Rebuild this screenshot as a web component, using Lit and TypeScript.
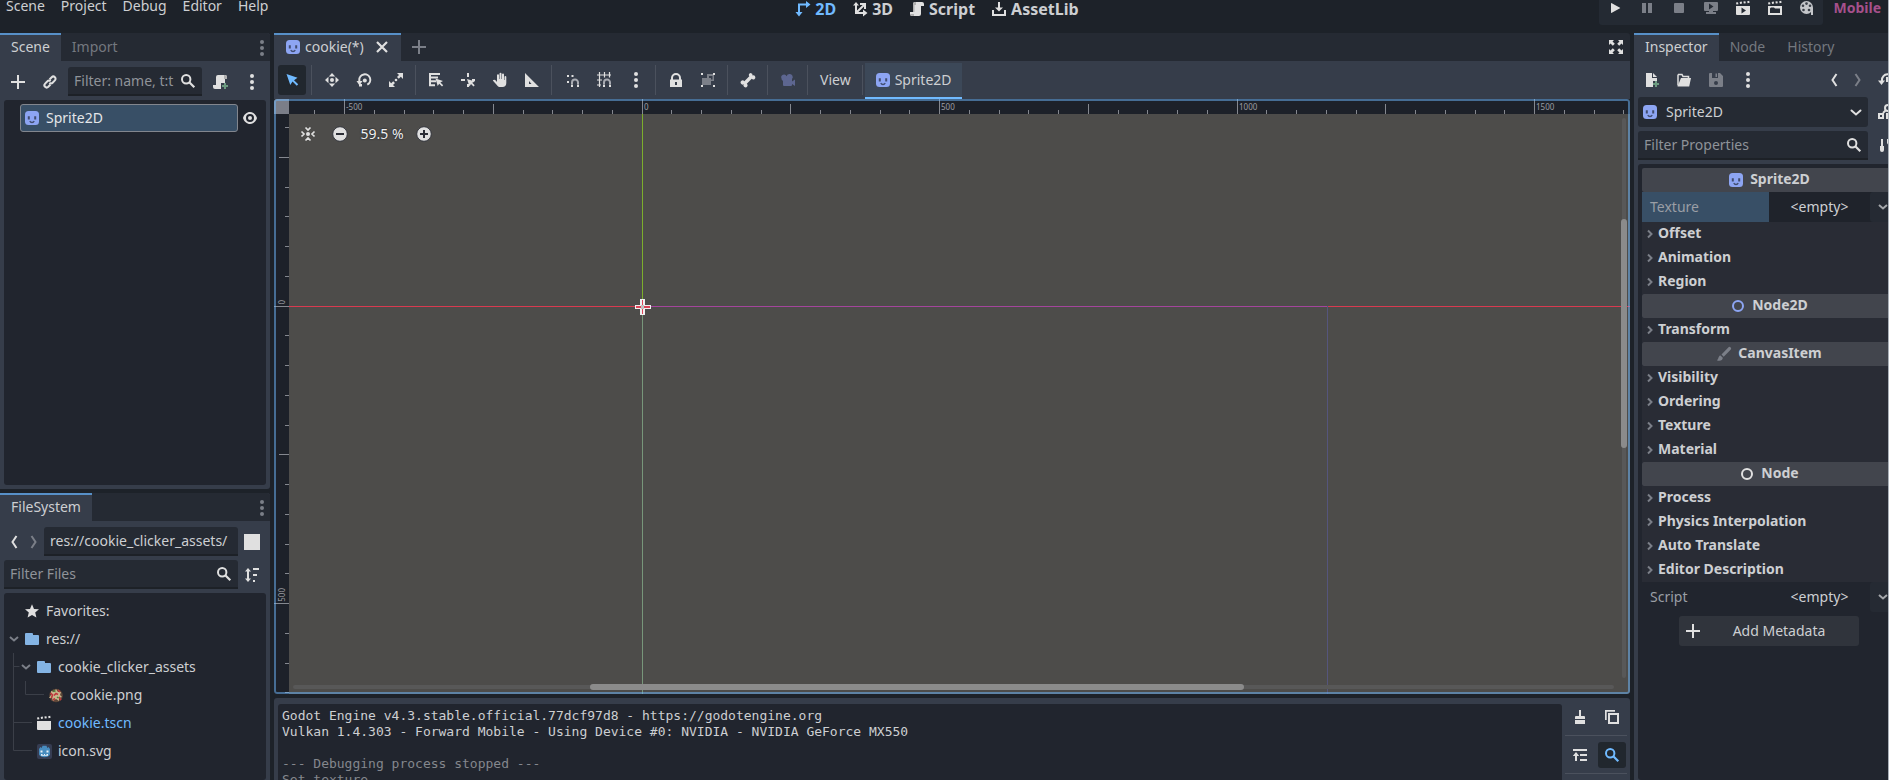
import { LitElement, html, svg, css, nothing } from "lit";
import { customElement, property } from "lit/decorators.js";
import { classMap } from "lit/directives/class-map.js";

const ICONS: Record<string, unknown> = {
  sprite: svg`<rect x="1" y="1" width="14" height="14" rx="3.5" fill="#8da5f3"/><path d="M3.8 6.2h2v3.4h-2zM10.2 6.2h2v3.4h-2z" fill="#414d70"/><path d="M5.8 11q.6 1.500 2.200 1.500T10.200 11" fill="none" stroke="#414d70" stroke-width="1.300"/>`,
  add: svg`<path d="M7 1v6H1v2h6v6h2V9h6V7H9V1z"/>`,
  link: svg`<g fill="none" stroke="currentColor" stroke-width="2"><path d="M7.500 5.500l2.200-2.300a2.200 2.200 0 0 1 3.200 3.200L10.600 8.700a2.200 2.200 0 0 1-3.200 0"/><path d="M8.500 10.500l-2.200 2.300a2.200 2.200 0 0 1-3.200-3.200l2.300-2.300a2.200 2.200 0 0 1 3.200 0"/></g>`,
  search: svg`<g fill="none" stroke="currentColor" stroke-width="2"><circle cx="6.200" cy="6.200" r="4.200"/><path d="M9.300 9.300l5 5" stroke-width="2.200"/></g>`,
  scriptAdd: svg`<path d="M6 1a2 2 0 0 0-2 2v8H1v2a2 2 0 0 0 2 2h6V9h4V5h2V3a2 2 0 0 0-2-2z"/><path d="M12 1h1a2 2 0 0 1 2 2v2h-3z" fill="#b0b0b0"/><path d="M12 9v2h-2v2h2v2h2v-2h2v-2h-2V9z" fill="#6c9a80"/>`,
  script: svg`<path d="M6 1a2 2 0 0 0-2 2v8H1v2a2 2 0 0 0 2 2h7a2 2 0 0 0 2-2V5h3V3a2 2 0 0 0-2-2z"/><path d="M6 1a2 2 0 0 0-2 2v8h1.500V4H7V1zM1 13h4v2H3a2 2 0 0 1-2-2z" fill="#b0b0b0"/>`,
  dots: svg`<circle cx="8" cy="2" r="2"/><circle cx="8" cy="8" r="2"/><circle cx="8" cy="14" r="2"/>`,
  eye: svg`<path d="M8 2C4.800 2 2 4.400 1 8c1 3.600 3.900 6 7 6s6-2.400 7-6c-1-3.600-3.800-6-7-6zm0 2a4 4 0 1 1 0 8 4 4 0 0 1 0-8zm0 2a2 2 0 1 0 0 4 2 2 0 0 0 0-4z"/>`,
  prev: svg`<path d="M10.500 2 6.500 8l4 6" fill="none" stroke="currentColor" stroke-width="2"/>`,
  next: svg`<path d="M5.500 2l4 6-4 6" fill="none" stroke="currentColor" stroke-width="2"/>`,
  square: svg`<path d="M0 0h16v16H0z"/>`,
  sort: svg`<path d="M4 1 1 4.500h2v7H1L4 15l3-3.500H5v-7h2zM9 1h6v2H9zM9 7h4v2H9zM9 13h2v2H9z"/>`,
  star: svg`<path d="M8 1.200l2 4.700 5 .4-3.800 3.300 1.200 5L8 12l-4.400 2.600 1.200-5L1 6.300l5-.4z"/>`,
  down: svg`<path d="M4 6l4 3.500L12 6" fill="none" stroke="currentColor" stroke-width="2"/>`,
  right: svg`<path d="M6 4.500 9.500 8 6 11.500" fill="none" stroke="currentColor" stroke-width="2"/>`,
  choose: svg`<path d="M3.500 6.500 8 10.500l4.500-4" fill="none" stroke="currentColor" stroke-width="2" stroke-linecap="round"/>`,
  folder: svg`<path d="M2 2a1 1 0 0 0-1 1v10a1 1 0 0 0 1 1h12a1 1 0 0 0 1-1V5a1 1 0 0 0-1-1H9V3a1 1 0 0 0-1-1z"/>`,
  clap: svg`<path d="M1 6h14v8a1 1 0 0 1-1 1H2a1 1 0 0 1-1-1zM1 2.600l2-.4.4 2-2 .4zM4.700 2l2-.4.4 2-2 .4zM8.400 1.600l2-.4.4 2-2 .4zM12.200 1.200l2-.4.4 2-2 .4z"/>`,
  cookie: svg`<circle cx="8" cy="8.500" r="6.800" fill="#5c4638"/><path d="M3 4l3 1 2-3 2 3 3 0-1 3 2 2-3 1 0 3-3-2-3 2-1-3-3 0 2-3z" fill="#c9b68c"/><path d="M2.500 6l2 2-1 3M6 8.500l2-2 2 1M10 3l2 2M5 13l2-1.500M11 10l2 3" stroke="#c0363c" stroke-width="1.600" fill="none"/><path d="M5.500 3.500l2 1M9 10l1.500 1" stroke="#4e8a3d" stroke-width="1.500"/>`,
  godot: svg`<rect x="1" y="1" width="15" height="15" rx="2" fill="#363d52"/><path d="M3 6l1.500-2 1.200 1 .8-2.200h4L11.300 5l1.200-1L14 6v5.500q-1.500 2.700-5.500 2.700T3 11.500z" fill="#478cbf"/><path d="M4.500 7.500h2v2h-2zM10.500 7.500h2v2h-2zM5 11h1.500v1H8v-1h1v1h1.500v-1H12v1.800H5z" fill="#e8f0f8"/>`,
  close: svg`<path d="M3 3l10 10M13 3 3 13" fill="none" stroke="currentColor" stroke-width="2.200"/>`,
  expand: svg`<path d="M1 1h5L4.500 2.500l2.300 2.300-2 2L2.500 4.500 1 6zM15 1v5l-1.500-1.500-2.300 2.300-2-2 2.300-2.300L10 1zM1 15v-5l1.500 1.500 2.300-2.300 2 2-2.300 2.300L6 15zM15 15h-5l1.500-1.500-2.300-2.300 2-2 2.300 2.300L15 10z"/>`,
  cursor: svg`<path d="M2.500 2l3.800 11 2.200-3.600 4.300 4.300 1.400-1.400L10 8.200l3.500-2.400z"/>`,
  move: svg`<path d="M8 1 4.800 4.500h6.400zM1 8l3.500-3.200v6.400zM15 8l-3.500-3.200v6.400zM8 15l-3.200-3.500h6.400z"/><circle cx="8" cy="8" r="2"/>`,
  rotate: svg`<path d="M3.300 9V8a5.500 5.500 0 1 1 8 4.700" fill="none" stroke="currentColor" stroke-width="2"/><path d="M.5 9h6l-3 4.500z"/><path d="M3 12h3v2.500H3z"/><circle cx="8.800" cy="8.500" r="2"/>`,
  scale: svg`<path d="M9 1h6v6l-2.200-2.200-2 2L9 5l2-2zM7 15H1V9l2.200 2.200 2-2L7 11l-2 2z"/><circle cx="8" cy="8" r="1.300"/>`,
  list: svg`<path d="M1 1h11v2H3v1.500h7v2H3v1.800h5v2H3v2h4v2H1z"/><path d="M7.500 6.500l2.200 7.500 1.500-2.300 2.800 2.800 1.200-1.200-2.800-2.800L15 9z"/>`,
  pivot: svg`<path d="M7 1h2v4H7zM1 7h4v2H1zM7 12h2v3H7zM12 7h3v2h-3z"/><path d="M7 7l2.500 7.500 1.500-2.500 2.500 2.500 1.200-1.200-2.500-2.500L15 9.500z"/>`,
  hand: svg`<path d="M5 3.200a1 1 0 0 1 2 0V7h.5V1.800a1 1 0 0 1 2 0V7h.5V2.500a1 1 0 0 1 2 0V8h.5V5a.9.9 0 0 1 1.800 0v6c0 2.500-1.500 4-3.800 4H8c-1.500 0-2.200-.6-3-1.800L.8 8.500c.8-1 2.200-.8 3 .1L5 10z"/>`,
  ruler: svg`<path d="M1 1v14h14zm4 8 2.500 3H5z" fill-rule="evenodd"/>`,
  snap: svg`<path d="M3 3h2v2H3zM7.500 3h2v2h-2zM3 9h2v2H3z"/><path d="M8 12v-1.500a3 3 0 0 1 6 0V12" fill="none" stroke="#a8abb2" stroke-width="2"/><path d="M7 12.500h2V15H7zM13 12.500h2V15h-2z"/>`,
  grid: svg`<path d="M3.500 0v15M8.500 0v5.500M13.500 0v5.500M1 3h14M1 8h5M1 13h4" fill="none" stroke="currentColor" stroke-width="1.200"/><path d="M8 12v-1.500a3 3 0 0 1 6 0V12" fill="none" stroke="#a8abb2" stroke-width="2"/><path d="M7 12.500h2V15H7zM13 12.500h2V15h-2z"/>`,
  lock: svg`<path d="M8 1a5 5 0 0 0-5 5v1.500H2V15h12V7.500h-1V6a5 5 0 0 0-5-5zm0 2a3 3 0 0 1 3 3v1.500H5V6a3 3 0 0 1 3-3zM7 10h2v3H7z" fill-rule="evenodd"/>`,
  group: svg`<path d="M7 2h7v7h-3v4H2V6h5zm2 2v2h2v1.500h1.500V4z" fill="#7c8089" fill-rule="evenodd"/><path d="M1 1h2v2H1zM13 1h2v2h-2zM1 13h2v2H1zM13 13h2v2h-2z"/>`,
  bone: svg`<path d="M10.500 1a2 2 0 0 0-1.200 3.300L4.300 9.200A2.100 2.100 0 1 0 3.700 12.300 2.100 2.100 0 1 0 6.800 11.700l4.900-4.900A2.100 2.100 0 1 0 12.600 3.400 2.200 2.200 0 0 0 10.500 1z"/>`,
  camera: svg`<path d="M9.500 2a3 3 0 0 0-2.900 2.200A2.700 2.700 0 0 0 1.500 6.500c0 1.200.6 1.800 1.500 2.300V13a1 1 0 0 0 1 1h7a1 1 0 0 0 1-1v-1l3 2V7.500l-3 2V7a3 3 0 0 0-2.500-5z"/>`,
  w2d: svg`<path d="M11 0v2.500H3V11H.5L4 15.500 7.500 11H5V4.500h6V7l4.500-3.500z"/>`,
  w3d: svg`<path d="M4 1 1 4.500h2V13h8v2.500L15.500 12 11 8.500V11H6.400L12 5.400V8h2V2H8v2h2.600L5 9.600V4.500h2z"/>`,
  asset: svg`<path d="M7 1h2v5.500h3L8 10.500l-4-4h3zM1 9h2v4h10V9h2v6H1z"/>`,
  play: svg`<path d="M4 12.500a.5.500 0 0 0 .8.300L13 8.300a.4.400 0 0 0 0-.6L4.800 3.200a.5.500 0 0 0-.8.300z"/>`,
  pause: svg`<path d="M3 3h4v10H3zM9 3h4v10H9z"/>`,
  stop: svg`<rect x="3" y="3" width="10" height="10" rx="1"/>`,
  remote: svg`<path d="M2 2h12a1 1 0 0 1 1 1v7a1 1 0 0 1-1 1h-4v1h3v2H3v-2h3v-1H2a1 1 0 0 1-1-1V3a1 1 0 0 1 1-1zm4 1.500v6l4.500-3z" fill-rule="evenodd"/>`,
  playScene: svg`<path d="M1 6h14v8a1 1 0 0 1-1 1H2a1 1 0 0 1-1-1zm5.500 1.500v6l4.500-3z" fill-rule="evenodd"/><path d="M1 2.600l2-.4.4 2-2 .4zM4.700 2l2-.4.4 2-2 .4zM8.400 1.600l2-.4.4 2-2 .4zM12.200 1.200l2-.4.4 2-2 .4z"/>`,
  playCustom: svg`<path d="M1 6h14v9H1zm2 2.500V13h10V8.500H8L7 7.500H4z" fill-rule="evenodd"/><path d="M1 2.600l2-.4.4 2-2 .4zM4.700 2l2-.4.4 2-2 .4zM8.400 1.600l2-.4.4 2-2 .4zM12.200 1.200l2-.4.4 2-2 .4z"/>`,
  reel: svg`<g fill="#c4c6ca"><circle cx="7.500" cy="7.500" r="6.500"/><path d="M12 8h2v7h-2z"/></g><g fill="#3a3f48"><circle cx="7.500" cy="3.600" r="1.300"/><circle cx="11" cy="5.800" r="1.300"/><circle cx="4" cy="5.800" r="1.300"/><circle cx="4.500" cy="10" r="1.300"/><circle cx="10" cy="10" r="1.300"/></g>`,
  fileNew: svg`<path d="M2 1v14h7V9h4V6H8V1zM9 1v4h4z"/><path d="M11 9v2H9v2h2v2h2v-2h2v-2h-2V9z" fill="#6c9a80"/>`,
  load: svg`<path d="M2 2.500h4l1 2h5.500v2.500M2 2.500v11" fill="none" stroke="currentColor" stroke-width="1.500"/><path d="M5 6h10l-1.800 8.500H1.500z"/>`,
  save: svg`<path d="M1 2v12a1 1 0 0 0 1 1h12a1 1 0 0 0 1-1V4l-3-3H2a1 1 0 0 0-1 1zm3-1h6v5H4zm4 8a2 2 0 1 1 0 4 2 2 0 0 1 0-4z" fill-rule="evenodd"/><path d="M7.500 1.500h1.500v3.500H7.500z"/>`,
  history: svg`<path d="M4 9V8a5.500 5.500 0 1 1 6 5.300" fill="none" stroke="currentColor" stroke-width="2"/><path d="M0 8.500h7L3.500 13z"/><path d="M8 5h2v5H8z"/>`,
  manage: svg`<circle cx="10" cy="4" r="3" fill="none" stroke="currentColor" stroke-width="2"/><path d="M8 6l-3 3" stroke="currentColor" stroke-width="2"/><path d="M0 9h6v6H0zM8 9h6v6H8zm-6 2v2h2v-2zm8 0v2h2v-2z" fill-rule="evenodd"/>`,
  tools: svg`<path d="M3 1h2v7h1v4a2 2 0 0 1-4 0V8h1zM9 1v4a3 3 0 0 0 2 2v8h2V7a3 3 0 0 0 2-2V1h-2v4h-2V1z"/>`,
  ring: svg`<circle cx="8" cy="8" r="5" fill="none" stroke="currentColor" stroke-width="2"/>`,
  brush: svg`<path d="M14.500 1.200a1.600 1.600 0 0 0-2.200.2L5.500 8.500l2.200 2.200 6.900-7a1.700 1.700 0 0 0-.1-2.500zM4.500 9.500C2.500 9.500 3 12 1 14.500c3 .8 5.800.2 5.800-2.700z"/>`,
  clear: svg`<path d="M7 1h2v6h3a1 1 0 0 1 1 1v2H3V8a1 1 0 0 1 1-1h3zM3 11h10v4H3z"/>`,
  copy: svg`<path d="M1 1h10v1.700H2.700V11H1z"/><path d="M5 5h9v9H5z" fill="none" stroke="currentColor" stroke-width="2"/>`,
  collapse: svg`<path d="M1 2h14v2H1zM8 7h7v2H8zM8 12h7v2H8zM4 5 .8 9H3v5h2V9h2.200z"/>`,
  centerView: svg`<g fill="none" stroke="currentColor" stroke-width="1.700"><path d="M5.500 1.500 8 4l2.500-2.500M5.500 14.500 8 12l2.500 2.500M1.500 5.500 4 8l-2.500 2.500M14.500 5.500 12 8l2.500 2.500"/></g><circle cx="8" cy="8" r="2"/>`,
  less: svg`<circle cx="8" cy="8" r="7.300" stroke="#33353d" stroke-width="1"/><path d="M4 7h8v2H4z" fill="#2b2d35"/>`,
  more: svg`<circle cx="8" cy="8" r="7.300" stroke="#33353d" stroke-width="1"/><path d="M7 4h2v3h3v2H9v3H7V9H4V7h3z" fill="#2b2d35"/>`,
};

const icon = (name: string, tone = "") =>
  html`<svg class="icon ${tone}" viewBox="0 0 16 16" width="16" height="16" fill="currentColor" aria-hidden="true">${ICONS[name]}</svg>`;

const tool = (name: string, label: string, tone = "", on = false) =>
  html`<button class=${classMap({ tool: true, on })} aria-label=${label}>${icon(name, tone)}</button>`;

const shared = css`
  * { box-sizing: border-box; }
  button, input, select { font: inherit; color: inherit; margin: 0; border: 0; background: none; padding: 0; outline: 0; }
  .icon { display: block; flex: none; color: #e0e0e0; overflow: visible; }
  .icon.dim { color: #7b7f88; }
  .icon.blue { color: #70baff; }
  .icon.node2d { color: #8da5f3; }
  .icon.folderblue { color: #84b4e4; }
  .icon.faded { color: #5d6690; }
  .tool { display: flex; align-items: center; justify-content: center; flex: none; width: 28px; height: 30px; border-radius: 3px; }
  .tool.on { background: #21272e; }
  .tabs { display: flex; height: 28px; flex: none; background: #252a33; border-radius: 0 3px 0 0; }
  .tab { display: flex; align-items: center; padding: 0 11px 2px; gap: 4px; color: #74787f; border-top: 2px solid transparent; }
  .tab.active { color: #cdcfd2; background: #363d4a; border-top-color: #5790c8; }
  .tabs .end { margin-left: auto; width: 16px; }
  .field { display: flex; align-items: center; height: 29px; flex: 1; min-width: 0; padding: 0 6px; background: #252a33; border-bottom: 2px solid #1d2127; border-radius: 3px 3px 0 0; }
  .field input { flex: 1; min-width: 0; width: 0; color: #cdcfd2; }
  .field input::placeholder { color: #8f9399; opacity: 1; }
  .panel { background: #21252e; border-radius: 3px; }
`;

@customElement("scene-dock")
class SceneDock extends LitElement {
  static styles = [shared, css`
    :host { display: flex; flex-direction: column; background: #363d4a; border-radius: 0 3px 3px 0; }
    .bar { display: flex; align-items: center; gap: 4px; padding: 6px 4px 4px; }
    .panel { flex: 1; margin: 0 4px 4px; padding: 4px; }
    .row { display: flex; align-items: center; padding-left: 12px; }
    .node { display: flex; align-items: center; gap: 6px; flex: 1; height: 28px; padding: 0 3px; color: #e4e6e9; background: #384f66; border: 1px solid #82868e; border-radius: 3px; }
    .row .tool { width: 24px; height: 28px; }
    .bar .tool { height: 29px; }
  `];
  render() {
    return html`
      <div class="tabs" role="tablist">
        <button class="tab active" role="tab">Scene</button>
        <button class="tab" role="tab">Import</button>
        <button class="tool end" aria-label="Dock options">${icon("dots", "dim")}</button>
      </div>
      <div class="bar">
        ${tool("add", "Add node")}${tool("link", "Instantiate scene")}
        <label class="field"><input placeholder="Filter: name, t:t" aria-label="Filter nodes" />${icon("search")}</label>
        ${tool("scriptAdd", "Attach script")}${tool("dots", "More")}
      </div>
      <div class="panel">
        <div class="row"><button class="node">${icon("sprite")}Sprite2D</button>${tool("eye", "Toggle visibility")}</div>
      </div>`;
  }
}

const FILES = [
  { depth: 0, icon: "star", text: "Favorites:" },
  { depth: 0, icon: "folder", tone: "folderblue", text: "res://", open: true },
  { depth: 1, icon: "folder", tone: "folderblue", text: "cookie_clicker_assets", open: true },
  { depth: 2, icon: "cookie", text: "cookie.png" },
  { depth: 1, icon: "clap", text: "cookie.tscn", current: true },
  { depth: 1, icon: "godot", text: "icon.svg" },
];

@customElement("file-dock")
class FileDock extends LitElement {
  static styles = [shared, css`
    :host { display: flex; flex-direction: column; background: #363d4a; border-radius: 0 3px 0 0; }
    .bar { display: flex; align-items: center; padding: 0 4px 4px; }
    .bar.path { padding-top: 6px; }
    .bar .tool { width: 20px; height: 29px; }
    .bar .last { width: 28px; }
    .panel { position: relative; flex: 1; margin: 0 4px; padding-top: 4px; }
    .item { display: flex; align-items: center; height: 28px; gap: 6px; padding-left: 20px; white-space: nowrap; }
    .item .icon { position: relative; }
    .item.d1 { padding-left: 32px; }
    .item.d2 { padding-left: 44px; }
    .item.open { padding-left: 2px; }
    .item.open.d1 { padding-left: 14px; }
    .item.open > :first-child { margin-right: -4px; }
    .item.current { color: #70baff; }
    .guides { position: absolute; left: 0; top: 0; overflow: visible; }
  `];
  render() {
    return html`
      <div class="tabs" role="tablist">
        <button class="tab active" role="tab">FileSystem</button>
        <button class="tool end" aria-label="Dock options">${icon("dots", "dim")}</button>
      </div>
      <div class="bar path">
        ${tool("prev", "Back")}${tool("next", "Forward", "dim")}
        <label class="field"><input value="res://cookie_clicker_assets/" aria-label="Path" /></label>
        <button class="tool last" aria-label="Split mode">${icon("square")}</button>
      </div>
      <div class="bar">
        <label class="field"><input placeholder="Filter Files" aria-label="Filter files" />${icon("search")}</label>
        <button class="tool last" aria-label="Sort files">${icon("sort")}</button>
      </div>
      <div class="panel">
        <svg class="guides" width="32" height="170" fill="none" stroke="#3b3f48" aria-hidden="true">
          <path d="M9.500 60v97.500h18.500M9.500 73.500h6M9.500 129.500h18.500M21.500 88v13.500h18.500" />
        </svg>
        ${FILES.map((f) => html`
          <div class=${classMap({ item: true, ["d" + f.depth]: true, open: !!f.open, current: !!f.current })}>
            ${f.open ? icon("down", "dim") : nothing}${icon(f.icon, f.tone ?? "")}<span>${f.text}</span>
          </div>`)}
      </div>`;
  }
}

const UNIT = 0.595;
const ORIGIN = { x: 368, y: 207 };

@customElement("canvas-view")
class CanvasView extends LitElement {
  static styles = [shared, css`
    :host { display: block; position: relative; overflow: hidden; background: #4d4c4a; border-radius: 3px; }
    .drawing { position: absolute; inset: 0; width: 100%; height: 100%; }
    .mark { position: absolute; font-size: 8px; line-height: 10px; color: #9b9da2; }
    .mark.side { writing-mode: vertical-rl; transform: rotate(180deg); }
    .zoom { position: absolute; left: 20px; top: 20px; display: flex; align-items: center; gap: 4px; color: #f0f0f0; text-shadow: 0 0 2px #23252b, 0 0 1px #23252b; }
    .zoom .value { width: 48px; text-align: center; }
    .track { position: absolute; background: #585858; border-radius: 2px; }
    .thumb { position: absolute; background: #8b8b8b; border-radius: 3px; }
    .track.v { top: 19px; bottom: 16px; right: 4px; width: 4px; }
    .track.h { left: 19px; right: 16px; bottom: 5px; height: 4px; }
    .thumb.v { left: -1px; width: 6px; top: 18%; height: 41%; }
    .thumb.h { top: -1px; height: 6px; left: 22.500%; width: 49.500%; }
    .focus { position: absolute; inset: 0; border: 2px solid rgba(112, 186, 255, 0.5); border-radius: 3px; pointer-events: none; }
  `];
  private ticks(origin: number, from: number, to: number) {
    const list: { at: number; value: number }[] = [];
    for (let v = from; v <= to; v += 50) {
      const at = Math.floor(origin + v * UNIT);
      if (at > 15) list.push({ at, value: v });
    }
    return list;
  }
  render() {
    const size = (v: number) => (v % 500 === 0 ? 15 : v % 250 === 0 ? 10 : 4);
    const width = this.clientWidth || window.innerWidth;
    const height = this.clientHeight || window.innerHeight;
    const top = this.ticks(ORIGIN.x, -600, (width - ORIGIN.x) / UNIT);
    const left = this.ticks(ORIGIN.y, -300, (height - ORIGIN.y) / UNIT);
    const frame = ORIGIN.x + Math.floor(1152 * UNIT);
    return html`
      <svg class="drawing" shape-rendering="crispEdges" aria-hidden="true">
        <rect width="100%" height="15" fill="#1d2129" />
        <rect width="15" height="100%" fill="#1d2129" />
        <rect width="15" height="15" fill="#7b7e88" />
        <rect x="15" y=${ORIGIN.y} width="100%" height="1" fill="#d93a50" />
        <rect x=${ORIGIN.x} y="15" width="1" height="192" fill="#7cae2c" />
        <rect x=${ORIGIN.x} y=${ORIGIN.y} width="1" height="100%" fill="#77967a" />
        <rect x=${ORIGIN.x} y=${ORIGIN.y} width=${frame - ORIGIN.x} height="1" fill="#a4459c" />
        <rect x=${frame} y=${ORIGIN.y} width="1" height="100%" fill="#55557c" />
        ${top.map((t) => svg`<rect x=${t.at} y=${15 - size(t.value)} width="1" height=${size(t.value)} fill="#85888f"/>`)}
        ${left.map((t) => svg`<rect y=${t.at} x=${15 - size(t.value)} height="1" width=${size(t.value)} fill="#85888f"/>`)}
        <g transform="translate(${ORIGIN.x} ${ORIGIN.y})">
          <path d="M-2 -7h5v6h6v4h-6v6h-5v-6h-5v-4h5z" fill="#f0f0f0" />
          <path d="M0 -6h1v5h-1zM0 3h1v5h-1zM-6 0h5v2h-5zM2 0h6v2h-6z" fill="#dc4457" />
          <path d="M-1 -1h3v4h-3z" fill="#c2c2c0" />
        </g>
      </svg>
      ${top.filter((t) => t.value % 500 === 0).map((t) => html`<span class="mark" style="left:${t.at + 2}px;top:3px">${t.value}</span>`)}
      ${left.filter((t) => t.value % 500 === 0).map((t) => html`<span class="mark side" style="left:3px;bottom:calc(100% - ${t.at - 1}px)">${t.value}</span>`)}
      <div class="zoom">
        ${tool("centerView", "Center view")}${tool("less", "Zoom out")}<span class="value">59.5 %</span>${tool("more", "Zoom in")}
      </div>
      <div class="track v"><div class="thumb v"></div></div>
      <div class="track h"><div class="thumb h"></div></div>
      <div class="focus"></div>`;
  }
  firstUpdated() {
    new ResizeObserver(() => this.requestUpdate()).observe(this);
  }
}

const TOOLS: string[][] = [
  ["move", "rotate", "scale"],
  ["list", "pivot", "hand", "ruler"],
  ["snap", "grid", "dots"],
  ["lock", "group"],
  ["bone"],
  ["camera"],
];

@customElement("main-area")
class MainArea extends LitElement {
  static styles = [shared, css`
    :host { display: flex; flex-direction: column; min-width: 0; }
    .tab .icon:last-child { margin-left: 6px; }
    .tabs .full { margin-left: auto; height: 28px; }
    .tabs .plus { width: 36px; height: 28px; }
    .bar { display: flex; align-items: center; gap: 4px; height: 38px; padding: 0 4px; background: #363d4a; }
    .sep { width: 4px; height: 30px; padding-left: 1px; flex: none; }
    .sep::before { content: ""; display: block; width: 1px; height: 100%; background: #4b515d; }
    .view { padding: 0 6px; height: 30px; }
    .context { display: flex; align-items: center; align-self: stretch; }
    .context button { display: flex; align-items: center; gap: 4px; align-self: stretch; margin-top: 2px; padding: 0 10px; background: #3c4858; border-bottom: 2px solid #70baff; }
    canvas-view { flex: 1; }
    .output { display: flex; height: 82px; flex: none; margin-top: 4px; padding: 6px 0 0 4px; background: #363d4a; border-radius: 3px 3px 0 0; overflow: hidden; }
    .log { flex: 1; margin: 0; padding: 4px; overflow: hidden; font: 13px/16px "DejaVu Sans Mono", monospace; color: #cdcfd2; border-radius: 3px 3px 0 0; }
    .log .muted { color: #84878d; }
    .side { width: 68px; padding: 0 3px; }
    .pair { display: flex; gap: 4px; padding: 0 1px; height: 38px; align-items: center; border-bottom: 1px solid #4b515d; }
    .pair .tool { height: 26px; }
    .pair:first-child { height: 32px; padding-bottom: 6px; }
  `];
  render() {
    return html`
      <div class="tabs" role="tablist">
        <button class="tab active" role="tab">${icon("sprite")}cookie(*)${icon("close")}</button>
        <button class="tool plus" aria-label="New scene">${icon("add", "dim")}</button>
        <button class="tool full" aria-label="Distraction free mode">${icon("expand")}</button>
      </div>
      <div class="bar" role="toolbar">
        ${tool("cursor", "Select", "blue", true)}
        ${TOOLS.map((g) => html`<span class="sep"></span>${g.map((n) => tool(n, n, n === "camera" ? "faded" : ""))}`)}
        <span class="sep"></span>
        <button class="view">View</button>
        <div class="context"><span class="sep"></span><button>${icon("sprite")}Sprite2D</button></div>
      </div>
      <canvas-view></canvas-view>
      <div class="output">
        <pre class="log panel">Godot Engine v4.3.stable.official.77dcf97d8 - https://godotengine.org
Vulkan 1.4.303 - Forward Mobile - Using Device #0: NVIDIA - NVIDIA GeForce MX550

<span class="muted">--- Debugging process stopped ---
Set texture</span></pre>
        <div class="side">
          <div class="pair">${tool("clear", "Clear output")}${tool("copy", "Copy output")}</div>
          <div class="pair">${tool("collapse", "Collapse duplicates")}${tool("search", "Search output", "blue", true)}</div>
        </div>
      </div>`;
  }
}

type Row = { kind: "class" | "fold" | "prop"; text: string; icon?: string; tone?: string; on?: boolean };
const ROWS: Row[] = [
  { kind: "class", text: "Sprite2D", icon: "sprite" },
  { kind: "prop", text: "Texture", on: true },
  { kind: "fold", text: "Offset" },
  { kind: "fold", text: "Animation" },
  { kind: "fold", text: "Region" },
  { kind: "class", text: "Node2D", icon: "ring", tone: "node2d" },
  { kind: "fold", text: "Transform" },
  { kind: "class", text: "CanvasItem", icon: "brush", tone: "dim" },
  { kind: "fold", text: "Visibility" },
  { kind: "fold", text: "Ordering" },
  { kind: "fold", text: "Texture" },
  { kind: "fold", text: "Material" },
  { kind: "class", text: "Node", icon: "ring" },
  { kind: "fold", text: "Process" },
  { kind: "fold", text: "Physics Interpolation" },
  { kind: "fold", text: "Auto Translate" },
  { kind: "fold", text: "Editor Description" },
  { kind: "prop", text: "Script" },
];

@customElement("property-row")
class PropertyRow extends LitElement {
  @property({ attribute: false }) row!: Row;
  static styles = [shared, css`
    :host { display: block; }
    .class { display: flex; align-items: center; justify-content: center; gap: 6px; height: 24px; font-weight: 700; background: #42454d; border-radius: 2px; }
    .fold { display: flex; align-items: center; width: 100%; height: 24px; font-weight: 700; background: #292c35; }
    .title { padding-bottom: 2px; }
    .prop { display: grid; grid-template-columns: 1fr 1fr; height: 30px; color: #9a9ea5; }
    .name { display: flex; align-items: center; padding-left: 8px; }
    .prop.on .name { background: #384f66; }
    .value { display: flex; align-items: stretch; color: #cdcfd2; }
    .on .value { background: #1f232b; }
    .value .empty { flex: 1; }
    .value .tool { width: 26px; background: #252a33; }
    .value .icon { color: #a4a7ab; }
  `];
  render() {
    const r = this.row;
    if (r.kind === "class") return html`<div class="class">${icon(r.icon!, r.tone)}<span class="title">${r.text}</span></div>`;
    if (r.kind === "fold") return html`<button class="fold">${icon("right", "dim")}<span class="title">${r.text}</span></button>`;
    return html`<div class=${classMap({ prop: true, on: !!r.on })}>
      <span class="name">${r.text}</span>
      <span class="value"><button class="empty">&lt;empty&gt;</button>${tool("down", "Open menu")}</span>
    </div>`;
  }
}

@customElement("inspector-dock")
class InspectorDock extends LitElement {
  static styles = [shared, css`
    :host { display: block; overflow: hidden; min-width: 0; }
    .dock { display: flex; flex-direction: column; width: 270px; height: 100%; background: #363d4a; }
    .bar { display: flex; align-items: center; gap: 4px; padding: 0 4px 4px; }
    .bar.top { padding: 4px 4px 2px; }
    .bar.top .prev { margin-left: auto; }
    .bar.top .nav { width: 20px; }
    .bar.filter .tool { height: 29px; }
    .object { position: relative; display: flex; align-items: center; flex: 1; height: 30px; padding: 0 4px; background: #252a33; border-radius: 3px; }
    .object select { flex: 1; appearance: none; padding-left: 8px; }
    .object .icon:last-child { pointer-events: none; }
    .panel { flex: 1; margin: 0 4px; padding: 4px; }
    .meta { display: flex; align-items: center; width: 180px; height: 30px; margin: 4px auto 0; padding: 0 6px; background: #30343c; border-radius: 3px; }
    .meta span { flex: 1; text-align: center; padding-left: 4px; }
  `];
  render() {
    return html`<div class="dock">
      <div class="tabs" role="tablist">
        <button class="tab active" role="tab">Inspector</button>
        <button class="tab" role="tab">Node</button>
        <button class="tab" role="tab">History</button>
      </div>
      <div class="bar top">
        ${tool("fileNew", "New resource")}${tool("load", "Load resource")}${tool("save", "Save resource", "dim")}${tool("dots", "More")}
        <button class="tool nav prev" aria-label="Previous">${icon("prev")}</button>
        <button class="tool nav" aria-label="Next">${icon("next", "dim")}</button>
        ${tool("history", "History")}
      </div>
      <div class="bar">
        <label class="object">${icon("sprite")}<select aria-label="Edited object"><option>Sprite2D</option></select>${icon("choose")}</label>
        ${tool("manage", "Documentation")}
      </div>
      <div class="bar filter">
        <label class="field"><input placeholder="Filter Properties" aria-label="Filter properties" />${icon("search")}</label>
        ${tool("tools", "Object settings")}
      </div>
      <div class="panel">
        ${ROWS.map((row) => html`<property-row .row=${row}></property-row>`)}
        <button class="meta">${icon("add")}<span>Add Metadata</span></button>
      </div>
    </div>`;
  }
}

@customElement("app-root")
class AppRoot extends LitElement {
  static styles = [shared, css`
    :host { display: flex; flex-direction: column; box-sizing: border-box; height: 100vh; overflow: hidden; font: 14px/20px "Noto Sans", sans-serif; color: #cdcfd2; background: #1d2229; border-right: 1px solid #a9b0b8; }
    header { display: flex; align-items: flex-start; height: 33px; flex: none; padding-left: 6px; }
    .menu { display: flex; gap: 16px; padding-right: 6px; line-height: 12px; }
    .spaces { display: flex; gap: 16px; margin: 0 auto; font-size: 16px; font-weight: 700; line-height: 18px; }
    .spaces button { display: flex; align-items: center; gap: 4px; }
    .spaces .active { color: #70baff; }
    .run { display: flex; padding: 0 2px; gap: 4px; height: 25px; background: #242a33; border-radius: 0 0 3px 3px; }
    .run .tool { height: 16px; }
    .renderer { margin: 0 7px 0 10px; font-weight: 700; line-height: 16px; color: #a5508b; }
    main { flex: 1; min-height: 0; display: grid; grid-template-columns: 270px minmax(0, 1fr) 254px; column-gap: 4px; }
    .left { display: flex; flex-direction: column; gap: 4px; min-height: 0; }
    scene-dock { flex: 1; }
    file-dock { height: 287px; }
  `];
  render() {
    return html`
      <header>
        <nav class="menu">${["Scene", "Project", "Debug", "Editor", "Help"].map((m) => html`<button>${m}</button>`)}</nav>
        <nav class="spaces">
          <button class="active">${icon("w2d", "blue")}2D</button>
          <button>${icon("w3d")}3D</button>
          <button>${icon("script")}Script</button>
          <button>${icon("asset")}AssetLib</button>
        </nav>
        <div class="run">
          ${tool("play", "Run project")}${tool("pause", "Pause", "dim")}${tool("stop", "Stop", "dim")}${tool("remote", "Remote debug", "dim")}
          ${tool("playScene", "Run current scene")}${tool("playCustom", "Run specific scene")}${tool("reel", "Movie maker")}
        </div>
        <button class="renderer">Mobile</button>
      </header>
      <main>
        <div class="left"><scene-dock></scene-dock><file-dock></file-dock></div>
        <main-area></main-area>
        <inspector-dock></inspector-dock>
      </main>`;
  }
}
